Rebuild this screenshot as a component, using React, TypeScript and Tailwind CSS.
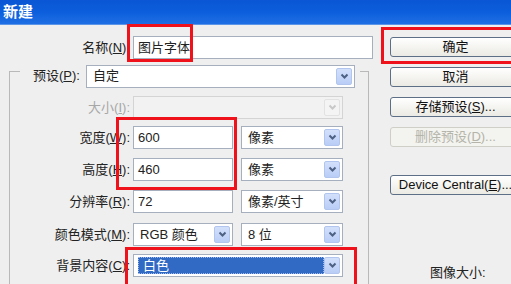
import React from "react";

const FONT = { fontFamily: '"Liberation Sans", "Noto Sans CJK SC", sans-serif' };

function Arrow({ disabled }: { disabled?: boolean }) {
  return (
    <div
      className={
        "flex h-full w-[16px] items-center justify-center rounded-[2px] border " +
        (disabled
          ? "border-[#e2e2e2] bg-[#f4f4f4]"
          : "border-[#b2c5ee] bg-gradient-to-b from-[#d3e0fb] to-[#b9cdf6]")
      }
    >
      <svg width="9" height="7" viewBox="0 0 9 7">
        <path
          d="M1.5 1.5 L4.5 4.5 L7.5 1.5"
          fill="none"
          stroke={disabled ? "#c8c8c8" : "#4d6185"}
          strokeWidth="2"
        />
      </svg>
    </div>
  );
}

function Select({
  w,
  text,
  disabled,
  highlight,
}: {
  w: string;
  text?: string;
  disabled?: boolean;
  highlight?: boolean;
}) {
  return (
    <div
      className={
        w +
        " flex h-[23px] items-stretch border p-[2px] " +
        (disabled ? "border-[#d4d4d4] bg-[#f2f2f2]" : "border-[#a5afbd] bg-white")
      }
    >
      <div className="flex flex-1 items-center pl-[2px]">
        {highlight ? (
          <div className="flex h-full w-[186px] items-center border border-dotted border-[#9fb8e8] bg-[#316ac5] pl-[4px] text-white">
            {text}
          </div>
        ) : (
          <span className="pl-[2px]">{text}</span>
        )}
      </div>
      <Arrow disabled={disabled} />
    </div>
  );
}

function Input({ w, text }: { w: string; text: string }) {
  return (
    <div className={w + " flex h-[23px] items-center border border-[#a5afbd] bg-white pl-[4px]"}>
      {text}
    </div>
  );
}

function Btn({ children, disabled, cls }: { children: React.ReactNode; disabled?: boolean; cls: string }) {
  return (
    <div
      className={
        cls +
        " flex h-[20px] w-[131px] items-center justify-center rounded-[3px] border " +
        (disabled
          ? "border-[#cfcfc8] bg-[#f3f3ef] text-[#b4b4aa]"
          : "border-[#5d6f86] bg-gradient-to-b from-white to-[#ebeae3] text-[#111]")
      }
    >
      {children}
    </div>
  );
}

function Row({ mt, label, children, disabled }: { mt: string; label: React.ReactNode; children: React.ReactNode; disabled?: boolean }) {
  return (
    <div className={mt + " flex items-center"}>
      <div className={"w-[120px] text-right " + (disabled ? "text-[#a7a7a7]" : "text-[#222]")}>{label}</div>
      <div className="ml-[3px] flex items-center gap-[8px]">{children}</div>
    </div>
  );
}

export default function App() {
  return (
    <div
      className="relative h-[284px] w-[511px] overflow-hidden bg-[#efefef] text-[13px] text-[#222]"
      style={FONT}
    >
      <div className="flex h-[25px] items-center border-b border-[#5b95e8] bg-gradient-to-b from-[#0a56d4] via-[#0c5edc] to-[#1e6fe4] pl-[3px] text-[15px] font-bold text-white">
        新建
      </div>
      <div className="flex">
        <div className="w-[380px] shrink-0">
          <div className="mt-[11px] flex items-center">
            <div className="w-[130px] text-right">
              名称(<span className="underline">N</span>):
            </div>
            <Input w="ml-[3px] w-[240px]" text="图片字体" />
          </div>
          <div className="ml-[9px] mt-[12px] h-[230px] w-[360px] border-l border-r border-t border-[#b9b9b9]">
            <div className="-mt-[8px] ml-[10px] flex h-[24px] w-[340px] items-center bg-[#efefef] pr-[5px]">
              <span className="pl-[13px]">
                预设(<span className="underline">P</span>):
              </span>
              <Select w="ml-auto w-[269px]" text="自定" />
            </div>
            <Row mt="mt-[8px]" label={<>大小(<span className="underline">I</span>):</>} disabled>
              <Select w="w-[210px]" disabled />
            </Row>
            <Row mt="mt-[7px]" label={<>宽度(<span className="underline">W</span>):</>}>
              <Input w="w-[100px]" text="600" />
              <Select w="w-[102px]" text="像素" />
            </Row>
            <Row mt="mt-[9px]" label={<>高度(<span className="underline">H</span>):</>}>
              <Input w="w-[100px]" text="460" />
              <Select w="w-[102px]" text="像素" />
            </Row>
            <Row mt="mt-[9px]" label={<>分辨率(<span className="underline">R</span>):</>}>
              <Input w="w-[100px]" text="72" />
              <Select w="w-[102px]" text="像素/英寸" />
            </Row>
            <Row mt="mt-[10px]" label={<>颜色模式(<span className="underline">M</span>):</>}>
              <Select w="w-[100px]" text="RGB 颜色" />
              <Select w="w-[102px]" text="8 位" />
            </Row>
            <Row mt="mt-[8px]" label={<>背景内容(<span className="underline">C</span>):</>}>
              <Select w="w-[210px]" text="白色" highlight />
            </Row>
          </div>
        </div>
        <div className="ml-[10px] flex shrink-0 flex-col">
          <Btn cls="mt-[12px]">确定</Btn>
          <Btn cls="mt-[10px]">取消</Btn>
          <Btn cls="mt-[10px]">
            存储预设(<span className="underline">S</span>)...
          </Btn>
          <Btn cls="mt-[10px]" disabled>
            删除预设(<span className="underline">D</span>)...
          </Btn>
          <Btn cls="mt-[28px]">
            Device Central(<span className="underline">E</span>)...
          </Btn>
          <div className="ml-[40px] mt-[70px] leading-[16px]">图像大小:</div>
        </div>
      </div>

      <div className="absolute left-[127px] top-[24px] h-[38px] w-[66px] border-[3px] border-[#f0121a]" />
      <div className="absolute left-[381px] top-[27px] h-[37px] w-[140px] border-[3px] border-[#f0121a]" />
      <div className="absolute left-[116px] top-[117px] h-[73px] w-[121px] border-[3px] border-[#f0121a]" />
      <div className="absolute left-[125px] top-[247px] h-[50px] w-[232px] border-[3px] border-[#f0121a]" />
    </div>
  );
}
